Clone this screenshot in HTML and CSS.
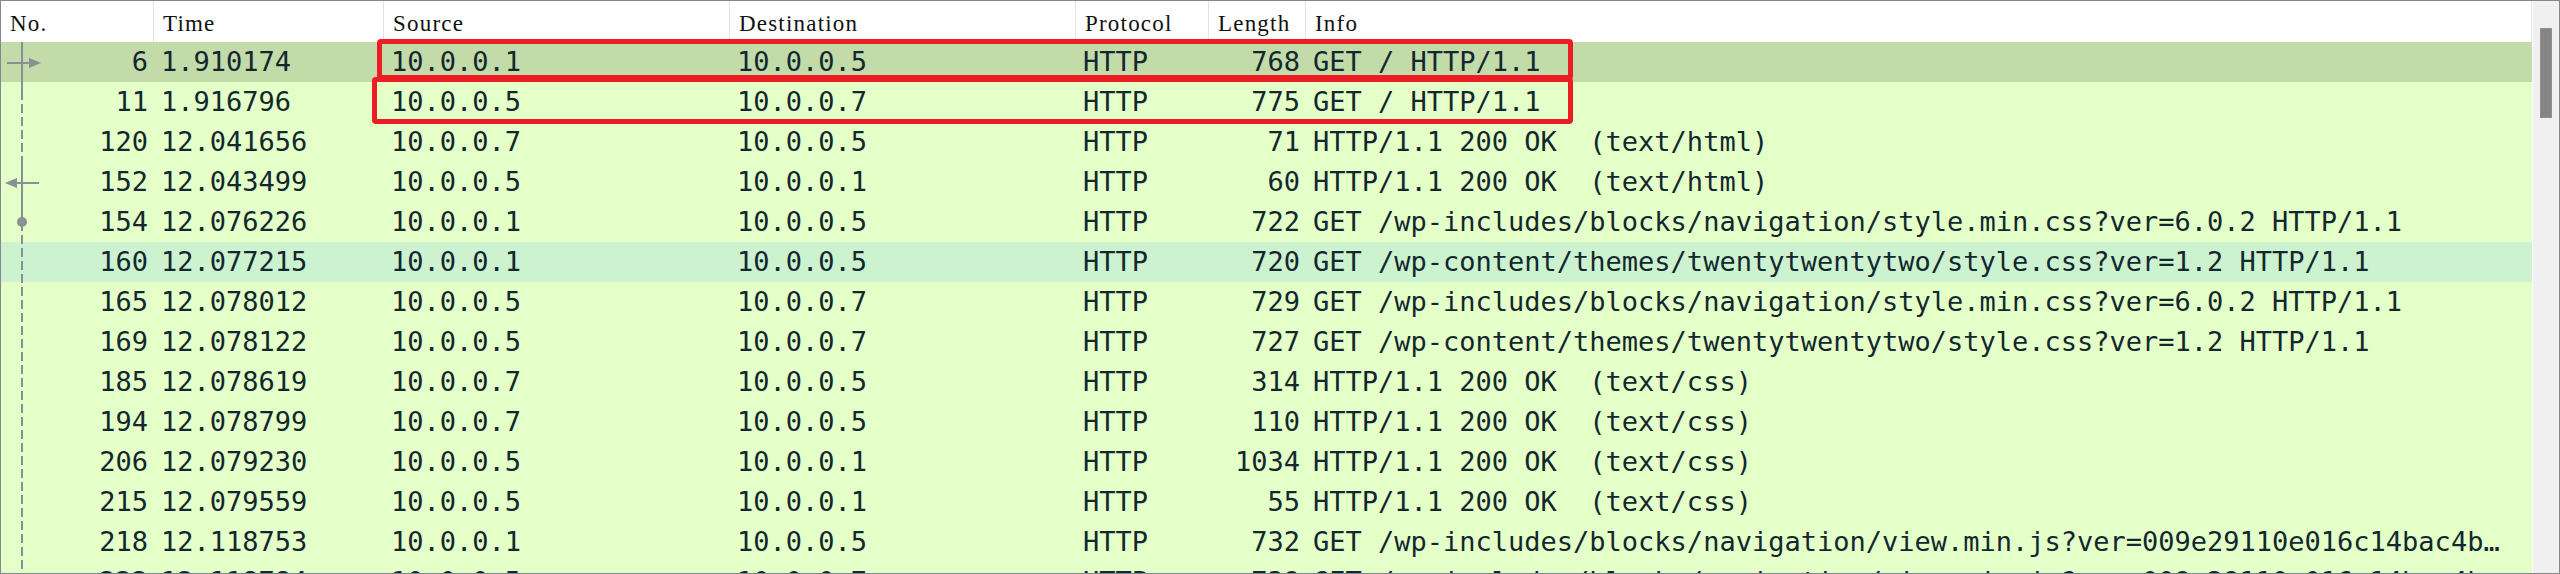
FILE: index.html
```html
<!DOCTYPE html>
<html>
<head>
<meta charset="utf-8">
<link rel="stylesheet" href="styles.css">
</head>
<body>
<div class="frame">
  <div class="table">
    <div class="head">
      <div class="hc">No.</div>
      <div class="hc">Time</div>
      <div class="hc">Source</div>
      <div class="hc">Destination</div>
      <div class="hc">Protocol</div>
      <div class="hc">Length</div>
      <div class="hc last">Info</div>
    </div>
    <div class="body">
      <div class="row sel"><span class="c r">6</span><span class="c">1.910174</span><span class="c">10.0.0.1</span><span class="c">10.0.0.5</span><span class="c">HTTP</span><span class="c r">768</span><span class="c info">GET / HTTP/1.1</span></div>
      <div class="row"><span class="c r">11</span><span class="c">1.916796</span><span class="c">10.0.0.5</span><span class="c">10.0.0.7</span><span class="c">HTTP</span><span class="c r">775</span><span class="c info">GET / HTTP/1.1</span></div>
      <div class="row"><span class="c r">120</span><span class="c">12.041656</span><span class="c">10.0.0.7</span><span class="c">10.0.0.5</span><span class="c">HTTP</span><span class="c r">71</span><span class="c info">HTTP/1.1 200 OK  (text/html)</span></div>
      <div class="row"><span class="c r">152</span><span class="c">12.043499</span><span class="c">10.0.0.5</span><span class="c">10.0.0.1</span><span class="c">HTTP</span><span class="c r">60</span><span class="c info">HTTP/1.1 200 OK  (text/html)</span></div>
      <div class="row"><span class="c r">154</span><span class="c">12.076226</span><span class="c">10.0.0.1</span><span class="c">10.0.0.5</span><span class="c">HTTP</span><span class="c r">722</span><span class="c info">GET /wp-includes/blocks/navigation/style.min.css?ver=6.0.2 HTTP/1.1</span></div>
      <div class="row hov"><span class="c r">160</span><span class="c">12.077215</span><span class="c">10.0.0.1</span><span class="c">10.0.0.5</span><span class="c">HTTP</span><span class="c r">720</span><span class="c info">GET /wp-content/themes/twentytwentytwo/style.css?ver=1.2 HTTP/1.1</span></div>
      <div class="row"><span class="c r">165</span><span class="c">12.078012</span><span class="c">10.0.0.5</span><span class="c">10.0.0.7</span><span class="c">HTTP</span><span class="c r">729</span><span class="c info">GET /wp-includes/blocks/navigation/style.min.css?ver=6.0.2 HTTP/1.1</span></div>
      <div class="row"><span class="c r">169</span><span class="c">12.078122</span><span class="c">10.0.0.5</span><span class="c">10.0.0.7</span><span class="c">HTTP</span><span class="c r">727</span><span class="c info">GET /wp-content/themes/twentytwentytwo/style.css?ver=1.2 HTTP/1.1</span></div>
      <div class="row"><span class="c r">185</span><span class="c">12.078619</span><span class="c">10.0.0.7</span><span class="c">10.0.0.5</span><span class="c">HTTP</span><span class="c r">314</span><span class="c info">HTTP/1.1 200 OK  (text/css)</span></div>
      <div class="row"><span class="c r">194</span><span class="c">12.078799</span><span class="c">10.0.0.7</span><span class="c">10.0.0.5</span><span class="c">HTTP</span><span class="c r">110</span><span class="c info">HTTP/1.1 200 OK  (text/css)</span></div>
      <div class="row"><span class="c r">206</span><span class="c">12.079230</span><span class="c">10.0.0.5</span><span class="c">10.0.0.1</span><span class="c">HTTP</span><span class="c r">1034</span><span class="c info">HTTP/1.1 200 OK  (text/css)</span></div>
      <div class="row"><span class="c r">215</span><span class="c">12.079559</span><span class="c">10.0.0.5</span><span class="c">10.0.0.1</span><span class="c">HTTP</span><span class="c r">55</span><span class="c info">HTTP/1.1 200 OK  (text/css)</span></div>
      <div class="row"><span class="c r">218</span><span class="c">12.118753</span><span class="c">10.0.0.1</span><span class="c">10.0.0.5</span><span class="c">HTTP</span><span class="c r">732</span><span class="c info">GET /wp-includes/blocks/navigation/view.min.js?ver=009e29110e016c14bac4b…</span></div>
      <div class="row"><span class="c r">222</span><span class="c">12.118784</span><span class="c">10.0.0.5</span><span class="c">10.0.0.7</span><span class="c">HTTP</span><span class="c r">739</span><span class="c info">GET /wp-includes/blocks/navigation/view.min.js?ver=009e29110e016c14bac4b…</span></div>
      <svg class="rel" width="45" height="531" viewBox="0 0 45 531">
        <g stroke="#8a8f94" stroke-width="2" fill="none">
          <line x1="21" y1="0" x2="21" y2="49"/>
          <line x1="21" y1="49" x2="21" y2="116" stroke-dasharray="9 4"/>
          <line x1="21" y1="116" x2="21" y2="180"/>
          <line x1="21" y1="180" x2="21" y2="531" stroke-dasharray="9 4"/>
          <line x1="6" y1="21" x2="30" y2="21"/>
          <line x1="15" y1="141" x2="38" y2="141"/>
        </g>
        <g fill="#8a8f94">
          <polygon points="28,16 40,21 28,26"/>
          <polygon points="4,141 16,136 16,146"/>
          <circle cx="21" cy="180" r="5"/>
        </g>
      </svg>
    </div>
  </div>
  <div class="gap"></div>
  <div class="scroll"><div class="thumb"></div></div>
  <div class="mark m1"></div>
  <div class="mark m2"></div>
</div>
</body>
</html>
```
FILE: styles.css
```css
html, body {
  margin: 0;
  padding: 0;
  background: #ffffff;
}
.frame {
  position: relative;
  width: 2560px;
  height: 574px;
  box-sizing: border-box;
  border: 1px solid #828790;
  display: flex;
  overflow: hidden;
  background: #ffffff;
}
.table {
  width: 2531px;
  display: flex;
  flex-direction: column;
}
.head {
  height: 41px;
  display: grid;
  grid-template-columns: 152px 230px 346px 346px 133px 97px 1fr;
  background: #ffffff;
}
.hc {
  font-family: "Liberation Serif", serif;
  font-size: 23px;
  letter-spacing: 1.2px;
  color: #111111;
  line-height: 41px;
  padding-top: 2px;
  box-sizing: border-box;
  padding-left: 9px;
  border-left: 1px solid #e3e3e3;
  white-space: nowrap;
  overflow: hidden;
}
.hc:first-child {
  border-left: none;
}
.hc.last {
  border-right: 1px solid #e3e3e3;
}
.body {
  position: relative;
  height: 531px;
  overflow: hidden;
  background: #e4ffc7;
}
.row {
  height: 40px;
  display: grid;
  grid-template-columns: 152px 230px 346px 346px 133px 97px 1fr;
  background: #e4ffc7;
  font-family: "DejaVu Sans Mono", monospace;
  font-size: 27px;
  line-height: 39px;
  color: #12272e;
}
.row.sel {
  background: #c3daa9;
}
.row.hov {
  background: #ccf2cf;
}
.c {
  padding-left: 8px;
  white-space: pre;
  overflow: hidden;
}
.c.r {
  text-align: right;
  padding-left: 0;
  padding-right: 5px;
}
.info {
  padding-left: 8px;
}
.rel {
  position: absolute;
  left: 0;
  top: 0;
}
.gap {
  width: 1px;
  background: #ffffff;
}
.scroll {
  flex: 1;
  background: #f0f0f0;
  padding-top: 27px;
  padding-left: 7px;
  box-sizing: border-box;
}
.thumb {
  width: 12px;
  height: 90px;
  background: #868686;
  box-sizing: border-box;
  border: 1px solid #8f8f8f;
}
.mark {
  position: absolute;
  box-sizing: border-box;
  border: 5px solid #ee1c25;
  border-radius: 4px;
}
.m1 {
  left: 376px;
  top: 38px;
  width: 1196px;
  height: 41px;
}
.m2 {
  left: 371px;
  top: 76px;
  width: 1201px;
  height: 47px;
}
```
